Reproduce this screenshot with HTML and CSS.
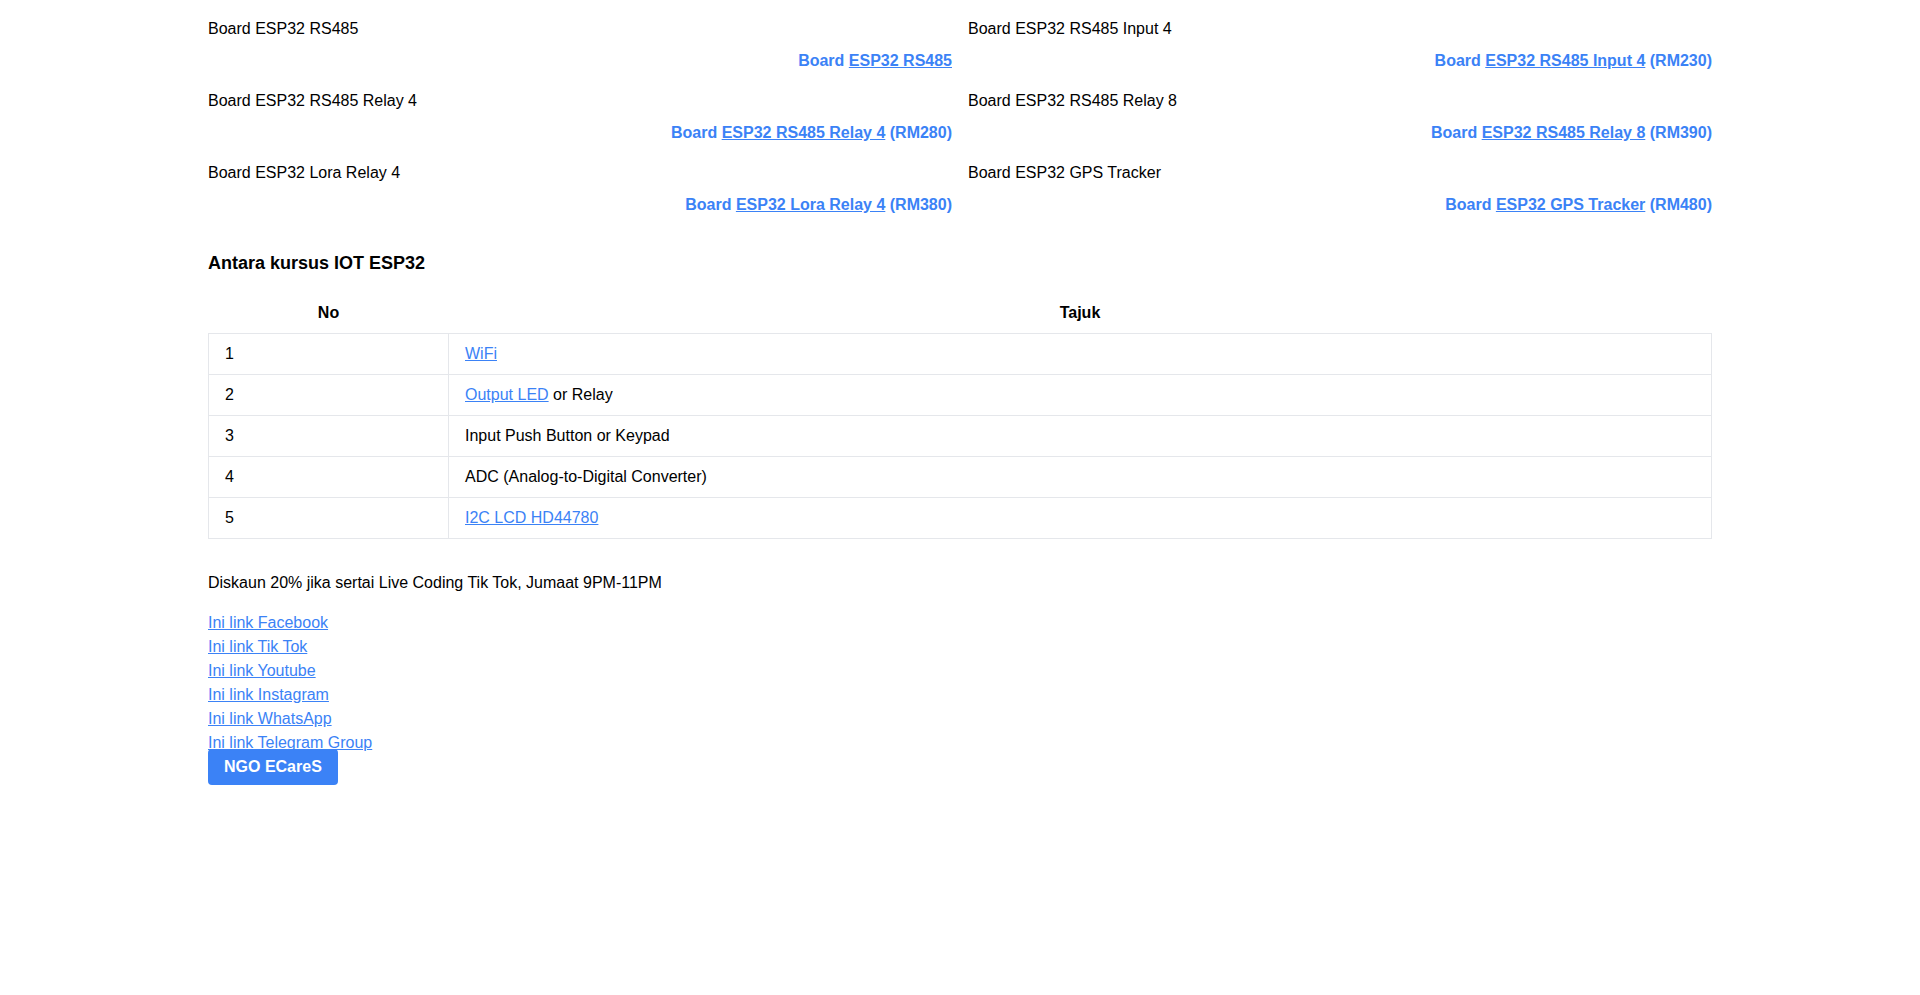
FILE: index.html
```html
<!DOCTYPE html>
<html lang="ms">
<head>
<meta charset="utf-8">
<title>ESP32</title>
<link rel="stylesheet" href="styles.css">
</head>
<body>
<div class="container">
  <div class="boards">
    <div class="board">
      <div class="board-name">Board ESP32 RS485</div>
      <div class="board-link"><span>Board </span><a href="#">ESP32 RS485</a></div>
    </div>
    <div class="board">
      <div class="board-name">Board ESP32 RS485 Input 4</div>
      <div class="board-link"><span>Board </span><a href="#">ESP32 RS485 Input 4</a><span> (RM230)</span></div>
    </div>
    <div class="board">
      <div class="board-name">Board ESP32 RS485 Relay 4</div>
      <div class="board-link"><span>Board </span><a href="#">ESP32 RS485 Relay 4</a><span> (RM280)</span></div>
    </div>
    <div class="board">
      <div class="board-name">Board ESP32 RS485 Relay 8</div>
      <div class="board-link"><span>Board </span><a href="#">ESP32 RS485 Relay 8</a><span> (RM390)</span></div>
    </div>
    <div class="board">
      <div class="board-name">Board ESP32 Lora Relay 4</div>
      <div class="board-link"><span>Board </span><a href="#">ESP32 Lora Relay 4</a><span> (RM380)</span></div>
    </div>
    <div class="board">
      <div class="board-name">Board ESP32 GPS Tracker</div>
      <div class="board-link"><span>Board </span><a href="#">ESP32 GPS Tracker</a><span> (RM480)</span></div>
    </div>
  </div>

  <h2 class="section-title">Antara kursus IOT ESP32</h2>

  <table class="courses">
    <thead>
      <tr><th class="col-no">No</th><th>Tajuk</th></tr>
    </thead>
    <tbody>
      <tr><td class="col-no">1</td><td><a href="#">WiFi</a></td></tr>
      <tr><td class="col-no">2</td><td><a href="#">Output LED</a> or Relay</td></tr>
      <tr><td class="col-no">3</td><td>Input Push Button or Keypad</td></tr>
      <tr><td class="col-no">4</td><td>ADC (Analog-to-Digital Converter)</td></tr>
      <tr><td class="col-no">5</td><td><a href="#">I2C LCD HD44780</a></td></tr>
    </tbody>
  </table>

  <p class="discount">Diskaun 20% jika sertai Live Coding Tik Tok, Jumaat 9PM-11PM</p>

  <div class="socials">
    <a href="#">Ini link Facebook</a>
    <a href="#">Ini link Tik Tok</a>
    <a href="#">Ini link Youtube</a>
    <a href="#">Ini link Instagram</a>
    <a href="#">Ini link WhatsApp</a>
    <a href="#">Ini link Telegram Group</a>
  </div>
  <button class="btn" type="button">NGO ECareS</button>
</div>
</body>
</html>
```

FILE: styles.css
```css
* { box-sizing: border-box; }
html, body {
  margin: 0;
  padding: 0;
  background: #ffffff;
  color: #000000;
  font-family: "Liberation Sans", Arial, Helvetica, sans-serif;
  font-size: 16px;
  line-height: 24px;
}
a { color: #3b82f6; text-decoration: underline; }

.container {
  max-width: 1536px;
  margin: 0 auto;
  padding: 17px 16px 0;
}

.boards {
  display: grid;
  grid-template-columns: 1fr 1fr;
  column-gap: 16px;
  row-gap: 16px;
  margin-bottom: 32px;
}
.board {
  display: flex;
  flex-direction: column;
  gap: 8px;
}
.board-link {
  text-align: right;
  font-weight: 700;
  color: #3b82f6;
}

.section-title {
  margin: 0 0 16px;
  font-size: 18px;
  line-height: 28px;
  font-weight: 700;
}

.courses {
  width: 100%;
  border-collapse: collapse;
}
.courses th {
  font-weight: 700;
  text-align: center;
  padding: 8px 16px;
}
.courses td {
  border: 1px solid #e5e7eb;
  padding: 8px 16px;
  text-align: left;
}
.courses .col-no { width: 240px; }

.discount {
  margin: 32px 0 16px;
}
.socials {
  display: flex;
  flex-direction: column;
  align-items: flex-start;
}
.btn {
  display: block;
  margin-top: -6px;
  background: #3b82f6;
  color: #ffffff;
  border: 0;
  border-radius: 4px;
  padding: 6px 16px;
  font-family: "Liberation Sans", Arial, Helvetica, sans-serif;
  font-size: 16px;
  line-height: 24px;
  font-weight: 700;
}
```
